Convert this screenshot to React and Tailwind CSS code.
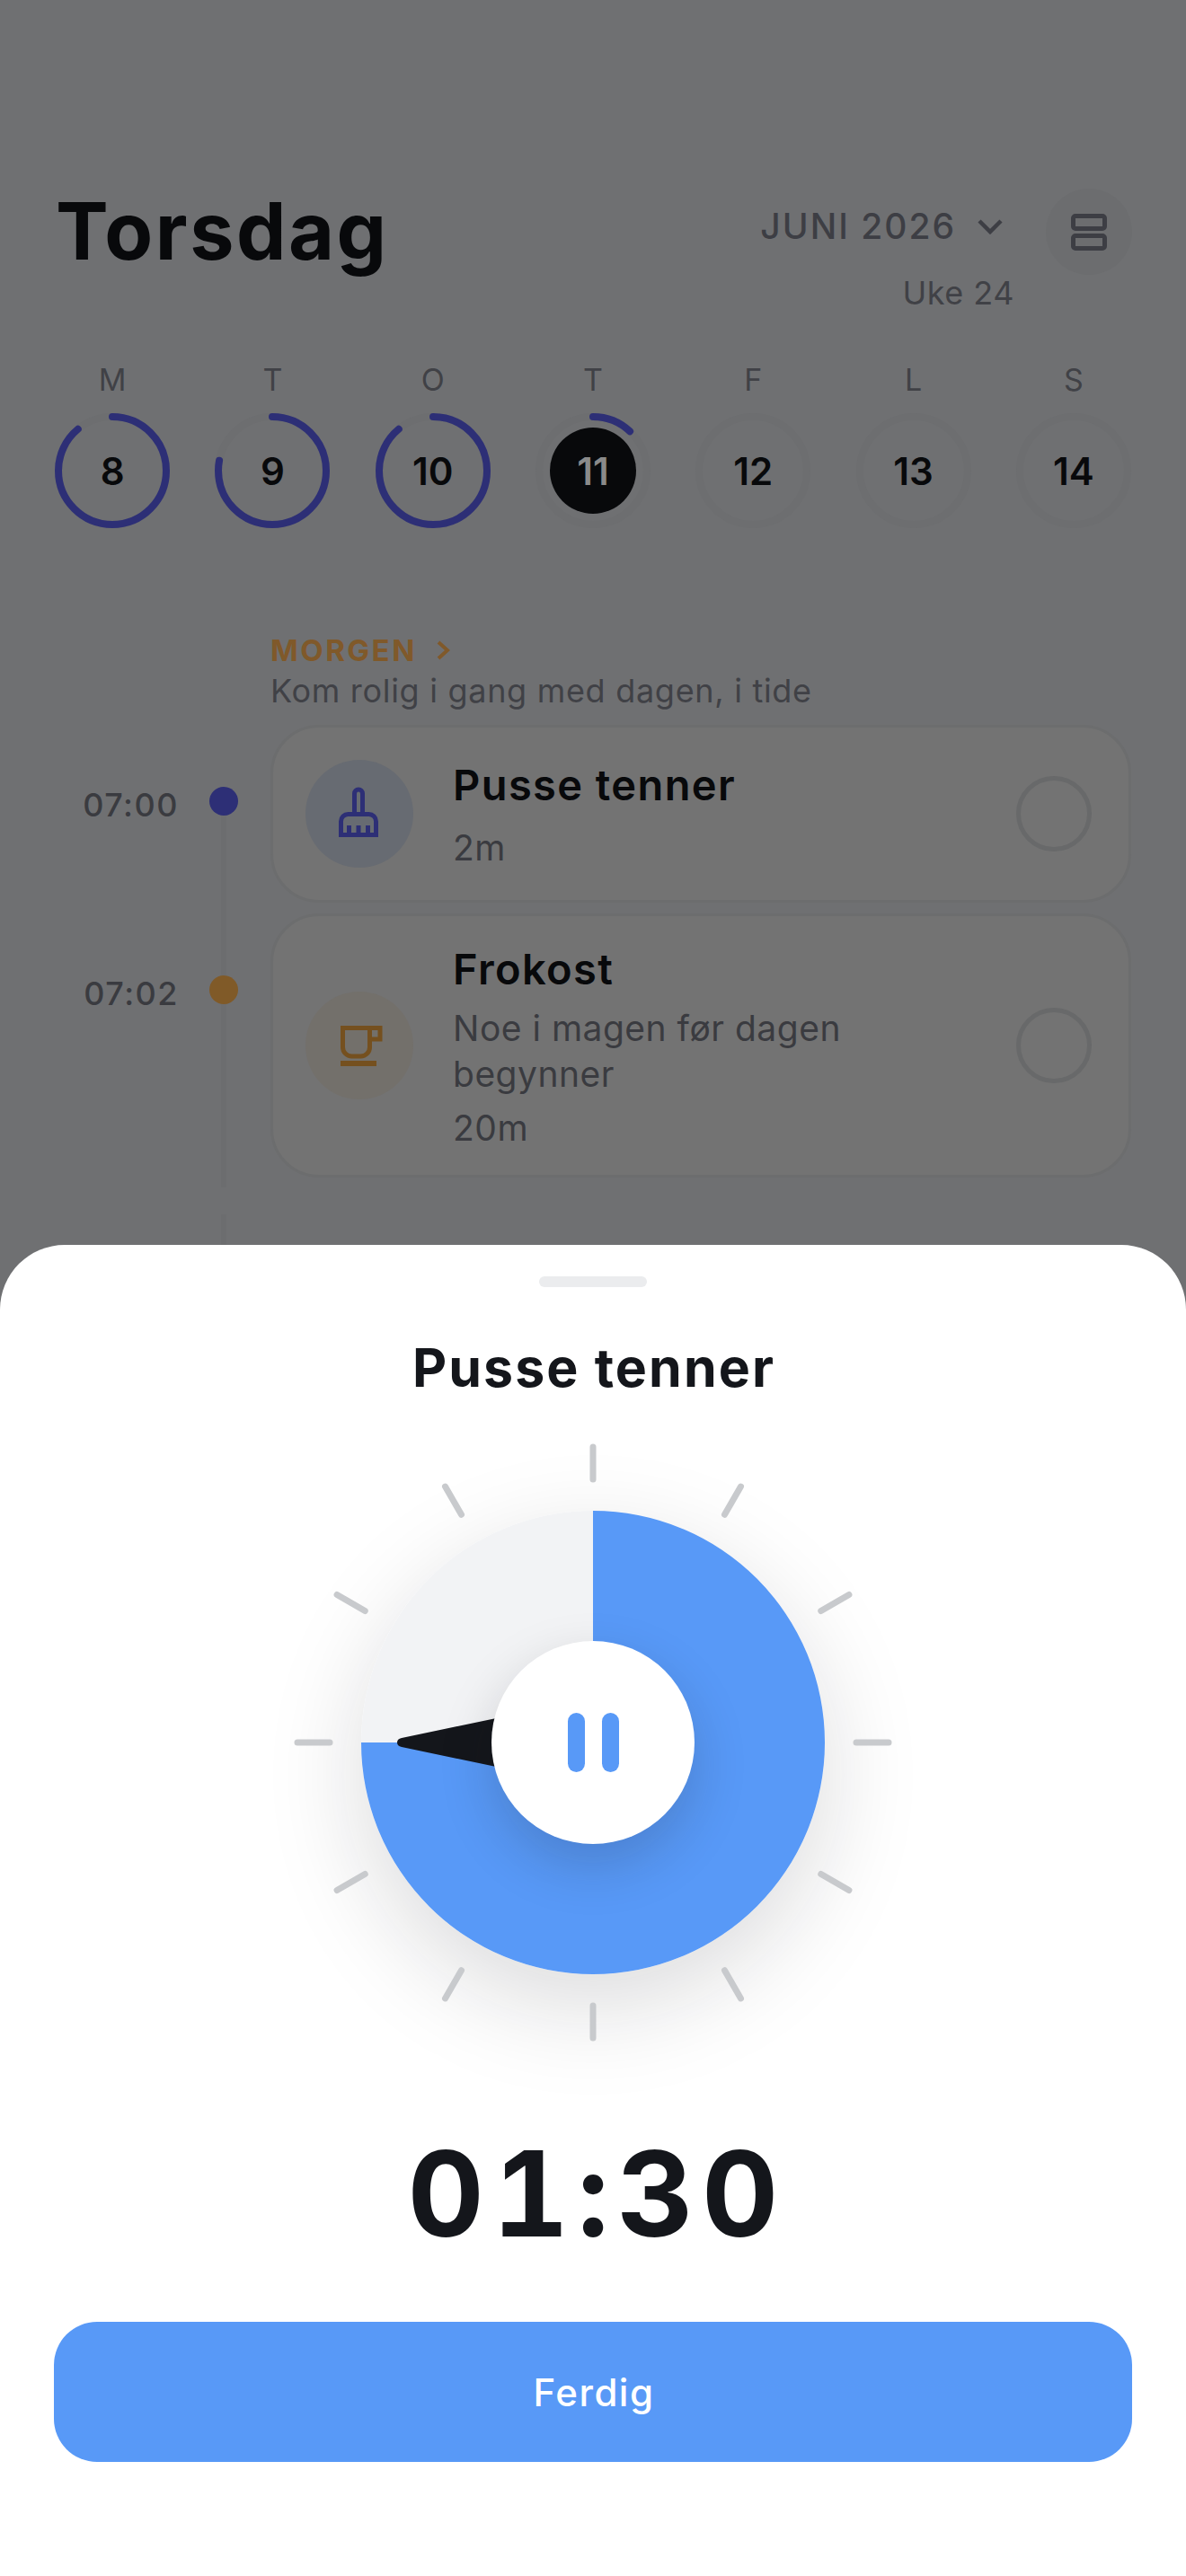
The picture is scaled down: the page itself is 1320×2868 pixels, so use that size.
const days = [
  { letter: 'M', num: 8, progress: 89 },
  { letter: 'T', num: 9, progress: 78 },
  { letter: 'O', num: 10, progress: 89 },
  { letter: 'T', num: 11, progress: 12, today: true },
  { letter: 'F', num: 12, progress: 0 },
  { letter: 'L', num: 13, progress: 0 },
  { letter: 'S', num: 14, progress: 0 },
]

const ticks = Array.from({ length: 12 }, (_, i) => i * 30)

function DayRing({ day }) {
  return (
    <div className="flex flex-col items-center">
      <span className="text-[34px] leading-[40px] text-[#404146]">{day.letter}</span>
      <div className="relative mt-[17px] flex h-[128px] w-[128px] items-center justify-center">
        <svg viewBox="0 0 128 128" className="absolute inset-0 h-full w-full -rotate-90">
          <circle cx="64" cy="64" r="60" fill="none" stroke="#6d6e70" strokeWidth="8" />
          {day.progress > 0 && (
            <circle
              cx="64"
              cy="64"
              r="60"
              fill="none"
              stroke="#2d2f76"
              strokeWidth="8"
              strokeLinecap="round"
              pathLength="100"
              strokeDasharray={`${day.progress} 100`}
            />
          )}
        </svg>
        {day.today ? (
          <div className="flex h-[96px] w-[96px] items-center justify-center rounded-full bg-[#08090b] text-[42px] font-semibold text-[#8a8a8a]">
            {day.num}
          </div>
        ) : (
          <span className="text-[42px] font-semibold text-[#08090b]">{day.num}</span>
        )}
      </div>
    </div>
  )
}

function BrushIcon() {
  return (
    <svg viewBox="0 0 60 60" className="h-[60px] w-[60px]" fill="none" stroke="#2d2f76" strokeWidth="5">
      <path d="M24.5 28V7.5a4.5 4.5 0 0 1 9 0V28" />
      <path d="M9.5 53.5V38.5a8 8 0 0 1 8-8h23a8 8 0 0 1 8 8v15z" />
      <path d="M18.5 43v10M29 43v10M39.5 43v10" />
    </svg>
  )
}

function CupIcon() {
  return (
    <svg viewBox="0 0 60 60" className="h-[60px] w-[60px]" fill="none" stroke="#75501f" strokeWidth="5">
      <path d="M11.5 10.5h30V32a10 10 0 0 1-10 10h-10a10 10 0 0 1-10-10z" />
      <path d="M41.5 10.5h11.5V23H41.5" />
      <path d="M9 50h40" strokeWidth="6" />
    </svg>
  )
}

function TimelineRow({ time, dotColor, height, lineAbove, children }) {
  return (
    <div className="flex" style={{ height }}>
      <div className="flex w-[241px] shrink-0">
        <span className="mt-[69px] w-[139px] text-right text-[36px] font-medium leading-[40px] tracking-[1.5px] text-[#3a3b40]">{time}</span>
        <div className="ml-[34px] flex w-[32px] flex-col items-center">
          <div className={`h-[69px] w-[6px] ${lineAbove ? 'bg-[#6c6d6f]' : ''}`} />
          <div className={`h-[32px] w-[32px] rounded-full ${dotColor}`} />
          <div className="w-[6px] flex-1 bg-[#6c6d6f]" />
        </div>
      </div>
      <div className="flex-1 pr-[1px]">{children}</div>
    </div>
  )
}

function TaskCard({ title, description, duration, iconBg, children, minHeight }) {
  return (
    <div
      className="flex items-center rounded-[54px] border-[3px] border-[#6c6d6e] bg-[#737373] py-[28px] pl-[36px] pr-[41px]"
      style={{ minHeight }}
    >
      <div className={`flex h-[120px] w-[120px] shrink-0 items-center justify-center rounded-full ${iconBg}`}>
        {children}
      </div>
      <div className="flex-1 pb-[4px] pl-[44px] pr-[60px]">
        <div className="text-[47px] font-semibold leading-[60px] tracking-[1.4px] text-[#08090b]">{title}</div>
        {description && (
          <div className="mt-[10px] text-[39px] leading-[51px] tracking-[0.5px] text-[#3a3b40]">{description}</div>
        )}
        <div className={`${description ? 'mt-[15px]' : 'mt-[20px]'} text-[39px] leading-[40px] tracking-[0.5px] text-[#3a3b40]`}>
          {duration}
        </div>
      </div>
      <div className="h-[84px] w-[84px] shrink-0 rounded-full border-[5px] border-[#68696a]" />
    </div>
  )
}

function TimerDial() {
  return (
    <div className="relative mx-auto mt-[22px] h-[720px] w-[720px]">
      <div className="absolute left-[102px] top-[102px] h-[516px] w-[516px] rounded-full shadow-[0_36px_110px_rgba(20,22,27,0.15)]" />
      <svg viewBox="-360 -360 720 720" className="absolute inset-0 h-full w-full">
        {ticks.map((a) => (
          <line
            key={a}
            x1="0"
            y1="-293"
            x2="0"
            y2="-329"
            stroke="#c8cacd"
            strokeWidth="7"
            strokeLinecap="round"
            transform={`rotate(${a})`}
          />
        ))}
        <circle cx="0" cy="0" r="258" fill="#f2f3f5" />
        <path d="M0 0V-258A258 258 0 1 1 -258 0Z" fill="#5899f7" />
        <path
          d="M-213 -5L-60 -37V37L-213 5Q-218 4 -218 0Q-218 -4 -213 -5Z"
          fill="#14161b"
        />
      </svg>
      <div className="absolute left-[247px] top-[247px] flex h-[226px] w-[226px] items-center justify-center gap-[19px] rounded-full bg-white shadow-[0_24px_60px_rgba(20,22,27,0.18)]">
        <div className="h-[66px] w-[19px] rounded-full bg-[#5899f7]" />
        <div className="h-[66px] w-[19px] rounded-full bg-[#5899f7]" />
      </div>
    </div>
  )
}

export default function App() {
  return (
    <div className="h-[2868px] w-[1320px] overflow-hidden bg-[#6f7072] font-['Inter',sans-serif]">
      <div className="h-[1386px] overflow-hidden">
        <header className="flex items-start justify-between pl-[62px] pr-[60px] pt-[210px]">
          <h1 className="text-[88px] font-bold leading-[94px] tracking-[2.5px] text-[#08090b]">Torsdag</h1>
          <div className="flex items-start">
            <div className="flex flex-col items-end pr-[35px]">
              <div className="flex h-[84px] items-center pr-[13px]">
                <span className="text-[39px] font-medium tracking-[2px] text-[#3d3e44]">JUNI 2026</span>
                <svg viewBox="0 0 28 17" className="ml-[24px] h-[17px] w-[28px]" fill="none" stroke="#3d3e44" strokeWidth="4.5">
                  <path d="M2 2l12 12L26 2" />
                </svg>
              </div>
              <span className="mt-[12px] text-[36px] leading-[40px] tracking-[0.5px] text-[#404146]">Uke 24</span>
            </div>
            <button className="flex h-[96px] w-[96px] items-center justify-center rounded-full bg-[#6c6d6f]">
              <svg viewBox="0 0 40 41" className="h-[41px] w-[40px]" fill="none" stroke="#3d3e44" strokeWidth="5">
                <rect x="2.5" y="2.5" width="35" height="14" rx="2.5" />
                <rect x="2.5" y="24.5" width="35" height="14" rx="2.5" />
              </svg>
            </button>
          </div>
        </header>

        <div className="mt-[57px] grid grid-cols-7 px-[36px]">
          {days.map((day) => (
            <DayRing key={day.num} day={day} />
          ))}
        </div>

        <div className="mt-[116px] pl-[301px]">
          <div className="flex items-center">
            <span className="text-[33px] font-bold leading-[40px] tracking-[2.5px] text-[#80592a]">MORGEN</span>
            <svg viewBox="0 0 16 22" className="ml-[21px] h-[22px] w-[16px]" fill="none" stroke="#80592a" strokeWidth="4">
              <path d="M3 2l10 9-10 9" />
            </svg>
          </div>
          <p className="mt-[3px] text-[36px] leading-[44px] tracking-[0.7px] text-[#404146]">Kom rolig i gang med dagen, i tide</p>
        </div>

        <div className="mt-[16px] pl-[60px] pr-[60px]">
          <TimelineRow time="07:00" dotColor="bg-[#2d2f76]" height={210}>
            <TaskCard title="Pusse tenner" duration="2m" iconBg="bg-[#676b72]" minHeight={198}>
              <BrushIcon />
            </TaskCard>
          </TimelineRow>
          <TimelineRow time="07:02" dotColor="bg-[#805a28]" height={305} lineAbove>
            <TaskCard
              title="Frokost"
              description="Noe i magen før dagen begynner"
              duration="20m"
              iconBg="bg-[#73706b]"
              minHeight={294}
            >
              <CupIcon />
            </TaskCard>
          </TimelineRow>
          <div className="ml-[186px] mt-[30px] h-[40px] w-[6px] bg-[#6c6d6f]" />
        </div>
      </div>

      <section className="flex h-[1482px] flex-col items-center rounded-t-[72px] bg-white pt-[35px]">
        <div className="h-[12px] w-[120px] rounded-full bg-[#ebecee]" />
        <h2 className="mt-[55px] pl-[2px] text-[59px] font-bold leading-[70px] tracking-[2.1px] text-[#14161b]">Pusse tenner</h2>
        <TimerDial />
        <div className="mt-[72px] pl-[9px] text-[132px] font-bold tabular-nums leading-[140px] tracking-[9px] text-[#14161b]">01:30</div>
        <button className="mt-[73px] h-[156px] w-[1200px] rounded-[48px] bg-[#5899f7] pl-[2px] text-[42px] font-medium tracking-[1.5px] text-white">
          Ferdig
        </button>
      </section>
    </div>
  )
}
